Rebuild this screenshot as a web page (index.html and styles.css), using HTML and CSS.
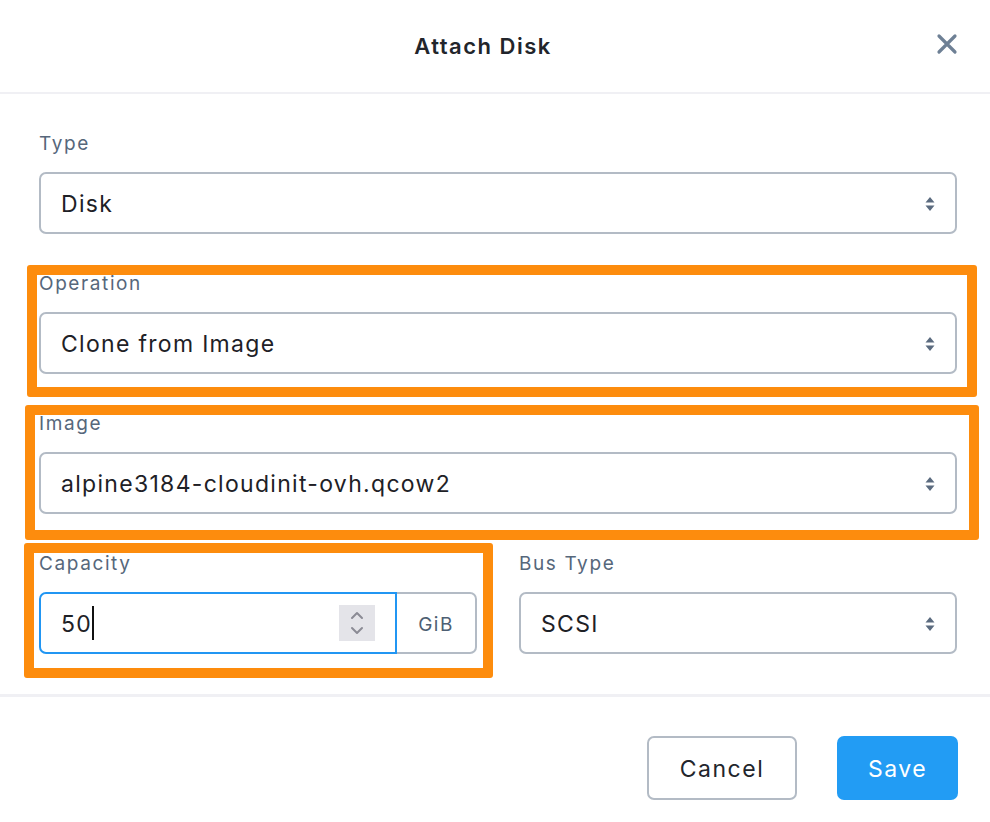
FILE: index.html
```html
<!DOCTYPE html>
<html lang="en">
<head>
<meta charset="utf-8">
<title>Attach Disk</title>
<link rel="stylesheet" href="styles.css">
</head>
<body>
<div class="dialog">
  <header class="dlg-head">
    <h1 class="dlg-title">Attach Disk</h1>
    <button class="close" aria-label="Close">
      <svg width="22" height="22" viewBox="0 0 22 22"><path d="M3 3 L19 19 M19 3 L3 19" stroke="#6e8095" stroke-width="3.2" stroke-linecap="round" fill="none"/></svg>
    </button>
  </header>

  <div class="dlg-body">
    <div class="field">
      <label class="lbl">Type</label>
      <div class="select"><span>Disk</span>
        <svg class="updown" width="10" height="16" viewBox="0 0 10 16"><path d="M5 1 L9.5 6.5 H0.5 Z M5 15 L9.5 9.5 H0.5 Z" fill="#5b6b7f"/></svg>
      </div>
    </div>
    <div class="field">
      <label class="lbl">Operation</label>
      <div class="select"><span>Clone from Image</span>
        <svg class="updown" width="10" height="16" viewBox="0 0 10 16"><path d="M5 1 L9.5 6.5 H0.5 Z M5 15 L9.5 9.5 H0.5 Z" fill="#5b6b7f"/></svg>
      </div>
    </div>
    <div class="field">
      <label class="lbl">Image</label>
      <div class="select"><span>alpine3184-cloudinit-ovh.qcow2</span>
        <svg class="updown" width="10" height="16" viewBox="0 0 10 16"><path d="M5 1 L9.5 6.5 H0.5 Z M5 15 L9.5 9.5 H0.5 Z" fill="#5b6b7f"/></svg>
      </div>
    </div>
    <div class="row2">
      <div class="field">
        <label class="lbl">Capacity</label>
        <div class="input-group">
          <div class="num-input">
            <span class="value">50</span><span class="caret"></span>
            <span class="spinner">
              <svg width="16" height="28" viewBox="0 0 16 28"><path d="M3 9 L8 4 L13 9 M3 19 L8 24 L13 19" stroke="#8b8b95" stroke-width="2" fill="none" stroke-linecap="round" stroke-linejoin="round"/></svg>
            </span>
          </div>
          <div class="addon">GiB</div>
        </div>
      </div>
      <div class="field">
        <label class="lbl">Bus Type</label>
        <div class="select"><span>SCSI</span>
          <svg class="updown" width="10" height="16" viewBox="0 0 10 16"><path d="M5 1 L9.5 6.5 H0.5 Z M5 15 L9.5 9.5 H0.5 Z" fill="#5b6b7f"/></svg>
        </div>
      </div>
    </div>

    <div class="mark mark-op"></div>
    <div class="mark mark-img"></div>
    <div class="mark mark-cap"></div>
  </div>

  <footer class="dlg-foot">
    <button class="btn btn-cancel">Cancel</button>
    <button class="btn btn-save">Save</button>
  </footer>
</div>
</body>
</html>
```

FILE: styles.css
```css
* { box-sizing: border-box; }
html, body { margin: 0; padding: 0; background: #fff; }
body {
  font-family: "Inter", "Noto Sans", "Liberation Sans", sans-serif;
  color: #1e2126;
}
.dialog { width: 990px; height: 822px; background: #fff; }

.dlg-head {
  height: 94px;
  border-bottom: 2px solid #f0f0f4;
  display: flex;
  align-items: center;
  justify-content: center;
  position: relative;
}
.dlg-title {
  margin: 0;
  font-size: 22px;
  font-weight: 600;
  color: #22252b;
  letter-spacing: 1.5px;
  transform: translate(-12px, 0);
}
.close {
  position: absolute;
  right: 32px;
  top: 33px;
  width: 22px; height: 22px;
  padding: 0; border: 0; background: none;
  display: flex;
}

.dlg-body {
  position: relative;
  padding: 37px 33px 3px 39px;
}
.field { display: flex; flex-direction: column; margin-bottom: 37px; }
.lbl {
  font-size: 19px;
  line-height: 24px;
  color: #56677b;
  margin-bottom: 17px;
  letter-spacing: 1.6px;
  transform: translateY(1px);
}
.select {
  height: 62px;
  border: 2px solid #b3bbc5;
  border-radius: 7px;
  display: flex;
  align-items: center;
  justify-content: space-between;
  padding: 2px 20px 0 20px;
  font-size: 23px;
  letter-spacing: 1.3px;
  color: #1e2126;
}
.updown { display: block; }

.row2 { display: grid; grid-template-columns: 1fr 1fr; column-gap: 42px; }

.input-group { display: flex; height: 62px; }
.num-input {
  flex: 1;
  border: 2px solid #2196f3;
  border-radius: 7px 0 0 7px;
  display: flex;
  align-items: center;
  padding: 0 20px;
  font-size: 23px;
  letter-spacing: 1.3px;
}
.value { padding-top: 2px; }
.caret { width: 2px; height: 34px; background: #111; margin-left: 0; }
.spinner {
  margin-left: auto;
  width: 36px; height: 36px;
  background: #e4e4e9;
  display: flex; align-items: center; justify-content: center;
}
.addon {
  width: 80px;
  border: 2px solid #b3bbc5;
  border-left: 0;
  border-radius: 0 7px 7px 0;
  display: flex; align-items: center; justify-content: center;
  padding-top: 2px;
  font-size: 19px;
  letter-spacing: 1.5px;
  color: #4e5f73;
}

.mark {
  position: absolute;
  border: 10px solid #fd8c0d;
  border-radius: 3px;
  pointer-events: none;
}
.mark-op  { left: 27px; top: 171px; width: 950px; height: 132px; }
.mark-img { left: 25px; top: 311px; width: 954px; height: 135px; }
.mark-cap { left: 24px; top: 449px; width: 469px; height: 135px; }

.dlg-foot {
  border-top: 3px solid #f0f0f4;
  display: flex;
  justify-content: flex-end;
  gap: 40px;
  padding: 39px 32px 0 0;
}
.btn {
  font-family: inherit;
  font-size: 23px;
  letter-spacing: 1.5px;
  height: 64px;
  border-radius: 7px;
  cursor: pointer;
  padding-top: 2px;
}
.btn-cancel {
  width: 150px;
  background: #fff;
  border: 2px solid #b3bbc5;
  color: #22252b;
}
.btn-save {
  width: 121px;
  background: #229cf4;
  border: 0;
  color: #fff;
}
```
